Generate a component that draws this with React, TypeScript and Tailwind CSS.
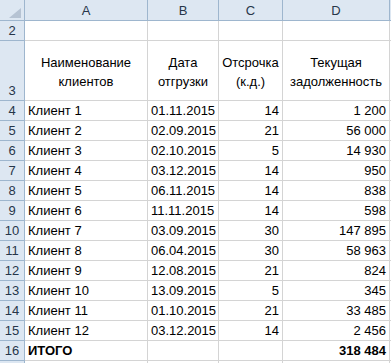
import React from 'react';

type Row = { n: number; name: string; date: string; delay: string; debt: string; bold?: boolean };

const rows: Row[] = [
  { n: 4, name: 'Клиент 1', date: '01.11.2015', delay: '14', debt: '1 200' },
  { n: 5, name: 'Клиент 2', date: '02.09.2015', delay: '21', debt: '56 000' },
  { n: 6, name: 'Клиент 3', date: '02.10.2015', delay: '5', debt: '14 930' },
  { n: 7, name: 'Клиент 4', date: '03.12.2015', delay: '14', debt: '950' },
  { n: 8, name: 'Клиент 5', date: '06.11.2015', delay: '14', debt: '838' },
  { n: 9, name: 'Клиент 6', date: '11.11.2015', delay: '14', debt: '598' },
  { n: 10, name: 'Клиент 7', date: '03.09.2015', delay: '30', debt: '147 895' },
  { n: 11, name: 'Клиент 8', date: '06.04.2015', delay: '30', debt: '58 963' },
  { n: 12, name: 'Клиент 9', date: '12.08.2015', delay: '21', debt: '824' },
  { n: 13, name: 'Клиент 10', date: '13.09.2015', delay: '5', debt: '345' },
  { n: 14, name: 'Клиент 11', date: '01.10.2015', delay: '21', debt: '33 485' },
  { n: 15, name: 'Клиент 12', date: '03.12.2015', delay: '14', debt: '2 456' },
  { n: 16, name: 'ИТОГО', date: '', delay: '', debt: '318 484', bold: true },
];

const colHead = 'flex items-center justify-center border-r border-b border-[#9eb6ce] bg-[#dde7f2] text-[#27364a]';
const rowHead = 'flex items-end justify-center pb-[1px] border-r border-b border-[#9eb6ce] bg-[#dde7f2] text-[#27364a]';
const cell = 'flex items-end pb-[1px] px-[3px] border-r border-b border-[#d4d4d4] bg-white whitespace-nowrap';
const caption = 'flex flex-col items-center justify-end pb-[9px] px-[3px] text-center leading-[19px] border-r border-b border-[#d4d4d4] bg-white whitespace-nowrap';

export default function App() {
  return (
    <div
      className="w-[391px] h-[363px] overflow-hidden bg-white text-[13px] leading-[17px] text-black"
      style={{ fontFamily: '"Liberation Sans", Arial, sans-serif' }}
    >
      <div className="grid grid-cols-[25px_123px_71px_64px_107px_1fr] grid-rows-[21px_20px_60px_repeat(14,20px)]">
        {/* column headers */}
        <div className="relative border-r border-b border-[#9eb6ce] bg-[#dde7f2]">
          <svg className="absolute left-[9px] top-[8px]" width="12" height="10" viewBox="0 0 12 10">
            <polygon points="12,0 12,10 0,10" fill="#b6c3d3" />
          </svg>
        </div>
        <div className={colHead}>A</div>
        <div className={colHead}>B</div>
        <div className={colHead}>C</div>
        <div className={colHead}>D</div>
        <div className="border-b border-[#9eb6ce] bg-[#dde7f2]" />

        {/* row 2 */}
        <div className={rowHead}>2</div>
        <div className={cell} />
        <div className={cell} />
        <div className={cell} />
        <div className={cell} />
        <div className="border-b border-[#d4d4d4]" />

        {/* row 3: table captions */}
        <div className={rowHead}>3</div>
        <div className={caption}>
          <span>Наименование</span>
          <span>клиентов</span>
        </div>
        <div className={caption}>
          <span>Дата</span>
          <span>отгрузки</span>
        </div>
        <div className={caption}>
          <span>Отсрочка</span>
          <span>(к.д.)</span>
        </div>
        <div className={caption}>
          <span>Текущая</span>
          <span>задолженность</span>
        </div>
        <div className="border-b border-[#d4d4d4]" />

        {rows.map((r) => (
          <React.Fragment key={r.n}>
            <div className={rowHead}>{r.n}</div>
            <div className={`${cell} ${r.bold ? 'font-bold' : ''}`}>{r.name}</div>
            <div className={cell}>{r.date}</div>
            <div className={`${cell} justify-end`}>{r.delay}</div>
            <div className={`${cell} justify-end ${r.bold ? 'font-bold' : ''}`}>{r.debt}</div>
            <div className="border-b border-[#d4d4d4]" />
          </React.Fragment>
        ))}

        {/* row 17, cut off at the bottom */}
        <div className="border-r border-[#9eb6ce] bg-[#dde7f2]" />
        <div className="border-r border-[#d4d4d4]" />
        <div className="border-r border-[#d4d4d4]" />
        <div className="border-r border-[#d4d4d4]" />
        <div className="border-r border-[#d4d4d4]" />
        <div />
      </div>
    </div>
  );
}
